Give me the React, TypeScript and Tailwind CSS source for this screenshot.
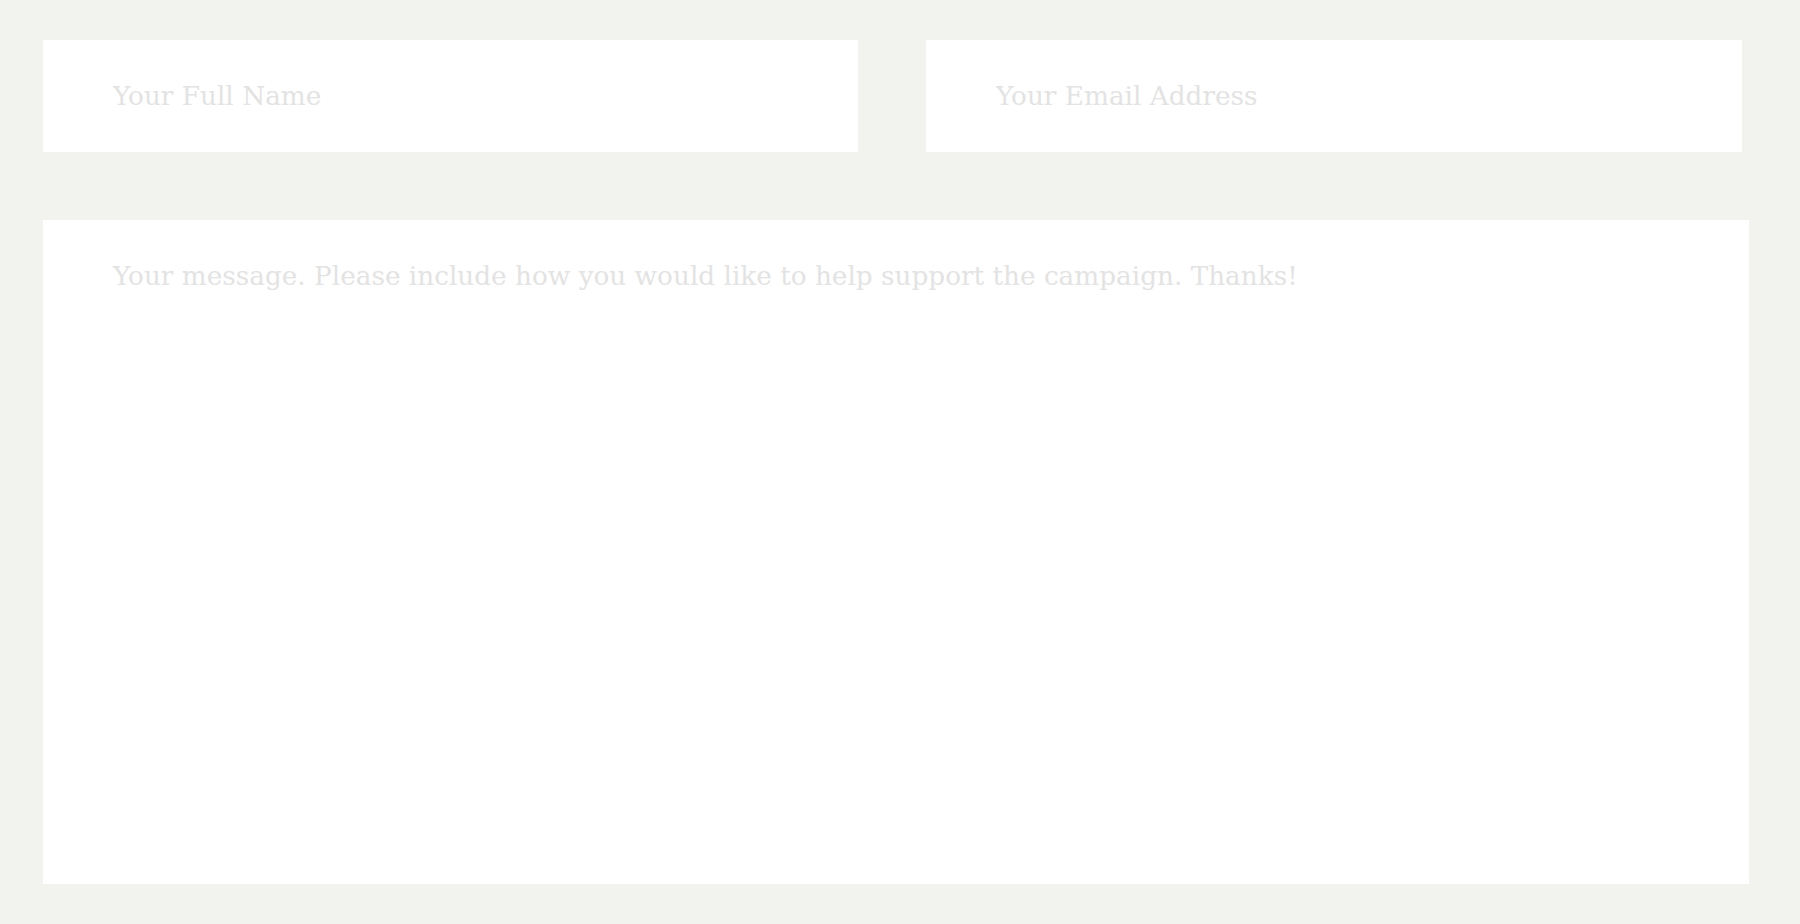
import React from "react";

export default function App() {
  return (
    <div className="min-h-[924px] w-full bg-[#f2f2ee] pt-[40px] pl-[43px] overflow-hidden font-['DejaVu_Serif','Liberation_Serif',serif]">
      <div className="flex gap-[68px]">
        <input
          type="text"
          placeholder="Your Full Name"
          className="w-[815px] h-[112px] bg-white px-[70px] text-[26.3px] text-[#555] placeholder:text-[#e3e3e3] outline-none"
        />
        <input
          type="email"
          placeholder="Your Email Address"
          className="w-[816px] h-[112px] bg-white px-[70px] text-[26.3px] text-[#555] placeholder:text-[#e3e3e3] outline-none"
        />
      </div>
      <textarea
        placeholder="Your message. Please include how you would like to help support the campaign. Thanks!"
        className="mt-[68px] block w-[1706px] h-[664px] bg-white px-[70px] pt-[38px] text-[26.3px] leading-[1.4] text-[#555] placeholder:text-[#e3e3e3] outline-none resize-none"
      />
    </div>
  );
}
